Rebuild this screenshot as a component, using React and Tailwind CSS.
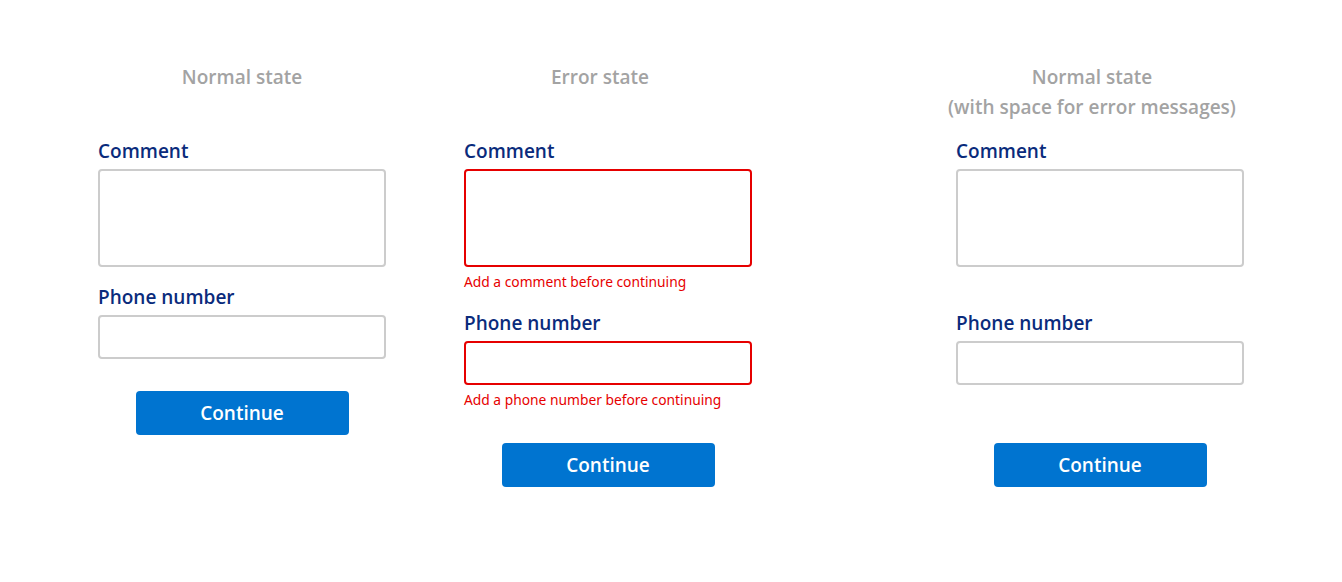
import React from 'react';

const Field = ({ label, tall, error, reserve }) => (
  <div className="flex flex-col">
    <label className="text-[19px] leading-6 font-semibold text-[#0a2b7c] mb-1.5">{label}</label>
    <div
      className={`w-full bg-white rounded-[4px] border-2 ${tall ? 'h-[98px]' : 'h-[44px]'} ${
        error ? 'border-[#e60000]' : 'border-[#cccccc]'
      }`}
    />
    {error ? (
      <div className="h-[26px] pt-1.5 text-[13.8px] leading-[18px] text-[#e60000] font-['Noto_Sans',sans-serif]">{error}</div>
    ) : reserve ? (
      <div className="h-[26px]" />
    ) : null}
  </div>
);

const Column = ({ title, errors, reserve, shift, className }) => (
  <div className={`w-[288px] flex flex-col ${className}`}>
    <div
      className={`h-[77px] text-center text-[19px] leading-[30px] font-semibold text-[#a3a3a3] ${
        shift ? '-ml-4' : ''
      }`}
    >
      {title.map((t) => (
        <div key={t} className="whitespace-nowrap">{t}</div>
      ))}
    </div>
    <Field label="Comment" tall error={errors && 'Add a comment before continuing'} reserve={reserve} />
    <div className="mt-[18px]">
      <Field label="Phone number" error={errors && 'Add a phone number before continuing'} reserve={reserve} />
    </div>
    <div className="mt-8 flex justify-center">
      <button className="w-[213px] h-[44px] rounded-[4px] bg-[#0074d0] text-white text-[19px] font-semibold">
        Continue
      </button>
    </div>
  </div>
);

export default function App() {
  return (
    <div className="min-h-screen bg-white font-['Open_Sans',sans-serif] pt-[62px]">
      <div className="flex items-start pl-[98px]">
        <Column title={['Normal state']} />
        <Column title={['Error state']} errors shift className="ml-[78px]" />
        <Column title={['Normal state', '(with space for error messages)']} reserve shift className="ml-[204px]" />
      </div>
    </div>
  );
}
